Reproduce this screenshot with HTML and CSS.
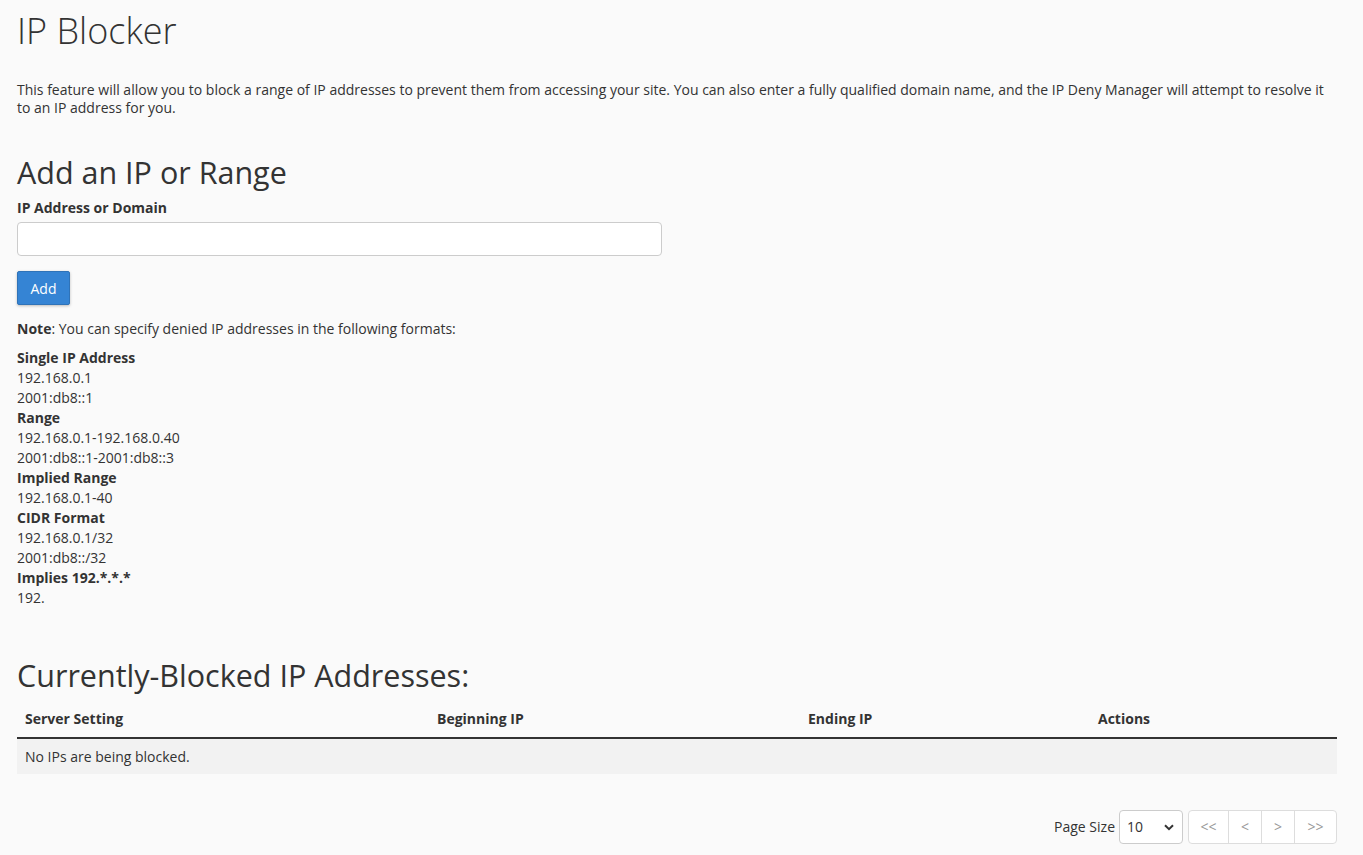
FILE: index.html
```html
<!DOCTYPE html>
<html>
<head>
<meta charset="utf-8">
<link rel="stylesheet" href="styles.css">
</head>
<body>
<div class="page">
  <h1 class="title">IP Blocker</h1>
  <p class="intro">This feature will allow you to block a range of IP addresses to prevent them from accessing your site. You can also enter a fully qualified domain name, and the IP Deny Manager will attempt to resolve it to an IP address for you.</p>

  <h2 class="section">Add an IP or Range</h2>
  <label class="label">IP Address or Domain</label>
  <input class="field" type="text">
  <div class="btn-row"><button class="btn">Add</button></div>
  <p class="note"><b>Note</b>: You can specify denied IP addresses in the following formats:</p>
  <dl class="formats">
    <dt>Single IP Address</dt>
    <dd>192.168.0.1</dd>
    <dd>2001:db8::1</dd>
    <dt>Range</dt>
    <dd>192.168.0.1-192.168.0.40</dd>
    <dd>2001:db8::1-2001:db8::3</dd>
    <dt>Implied Range</dt>
    <dd>192.168.0.1-40</dd>
    <dt>CIDR Format</dt>
    <dd>192.168.0.1/32</dd>
    <dd>2001:db8::/32</dd>
    <dt>Implies 192.*.*.*</dt>
    <dd>192.</dd>
  </dl>

  <h2 class="section blocked">Currently-Blocked IP Addresses:</h2>
  <table class="table">
    <thead>
      <tr>
        <th class="c1">Server Setting</th>
        <th class="c2">Beginning IP</th>
        <th class="c3">Ending IP</th>
        <th class="c4">Actions</th>
      </tr>
    </thead>
    <tbody>
      <tr><td colspan="4">No IPs are being blocked.</td></tr>
    </tbody>
  </table>

  <div class="pager">
    <span class="ps-label">Page Size</span>
    <div class="select"><span>10</span><svg width="10" height="7" viewBox="0 0 10 7"><path d="M1 1.2 L5 5.2 L9 1.2" fill="none" stroke="#333" stroke-width="2"/></svg></div>
    <div class="pg">
      <span class="pg-b first">&lt;&lt;</span>
      <span class="pg-b">&lt;</span>
      <span class="pg-b">&gt;</span>
      <span class="pg-b last">&gt;&gt;</span>
    </div>
  </div>
</div>
</body>
</html>
```

FILE: styles.css
```css
html, body {
  margin: 0;
  padding: 0;
  background: #fafafa;
}
body {
  font-family: "Open Sans", "Liberation Sans", sans-serif;
  font-size: 14px;
  color: #333;
  line-height: 20px;
}
.page {
  padding: 0 26px 0 17px;
}
.title {
  font-size: 36px;
  font-weight: 300;
  line-height: 40px;
  margin: 0;
  padding-top: 11px;
}
.intro {
  margin: 30px 0 0;
  line-height: 18px;
}
.section {
  font-size: 30.5px;
  font-weight: 400;
  line-height: 36px;
  margin: 37px 0 0;
}
.label {
  display: block;
  font-weight: 700;
  margin-top: 8px;
}
.field {
  display: block;
  box-sizing: border-box;
  width: 645px;
  height: 34px;
  margin-top: 4px;
  border: 1px solid #ccc;
  border-radius: 4px;
  background: #fff;
}
.btn-row {
  margin-top: 15px;
}
.btn {
  font-family: "Open Sans", "Liberation Sans", sans-serif;
  font-size: 14px;
  color: #fff;
  background: #3584d4;
  border: 1px solid #2f73b8;
  border-radius: 2px;
  height: 34px;
  width: 53px;
  padding: 0;
  box-shadow: 0 1px 3px rgba(0,0,0,0.25);
}
.note {
  margin: 14px 0 0;
}
.formats {
  margin: 9px 0 0;
}
.formats dt {
  font-weight: 700;
}
.formats dd {
  margin: 0;
}
.blocked {
  margin-top: 49px;
}
.table {
  width: 1320px;
  border-collapse: collapse;
  margin-top: 8px;
}
.table th {
  text-align: left;
  font-weight: 700;
  padding: 8px 8px 8px;
  border-bottom: 2px solid #333;
}
.c1 { width: 396px; }
.c2 { width: 355px; }
.c3 { width: 274px; }
.table td {
  background: #f2f2f2;
  padding: 8px 8px 7px;
}
.pager {
  display: flex;
  justify-content: flex-end;
  align-items: center;
  margin-top: 36px;
}
.ps-label {
  margin-right: 4px;
}
.select {
  box-sizing: border-box;
  width: 64px;
  height: 34px;
  border: 1px solid #ccc;
  border-radius: 4px;
  background: #fff;
  display: flex;
  align-items: center;
  justify-content: space-between;
  padding: 0 8px 0 7px;
}
.pg {
  display: flex;
  margin-left: 5px;
  border: 1px solid #ddd;
  border-radius: 4px;
  background: #fff;
  height: 34px;
  box-sizing: border-box;
}
.pg-b {
  display: flex;
  align-items: center;
  justify-content: center;
  width: 32px;
  color: #999;
  border-left: 1px solid #ddd;
}
.pg-b.first {
  border-left: none;
  width: 39px;
}
.pg-b.last {
  width: 41px;
}
```
